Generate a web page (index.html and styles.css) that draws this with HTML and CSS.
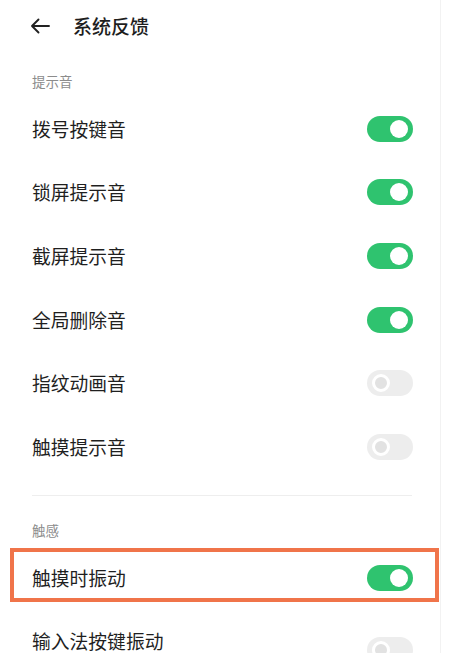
FILE: index.html
```html
<!DOCTYPE html>
<html lang="zh-CN">
<head>
<meta charset="utf-8">
<link rel="stylesheet" href="styles.css">
</head>
<body>
<div class="page">
  <header class="header">
    <svg class="back" width="22" height="16" viewBox="0 0 22 16"><path d="M20 8H3M9.5 1.5L3 8l6.5 6.5" fill="none" stroke="#222" stroke-width="1.9" stroke-linecap="round" stroke-linejoin="round"/></svg>
    <h1 class="title">系统反馈</h1>
  </header>

  <div class="section-label">提示音</div>
  <div class="row"><span class="row-text">拨号按键音</span><span class="switch on"></span></div>
  <div class="row"><span class="row-text">锁屏提示音</span><span class="switch on"></span></div>
  <div class="row"><span class="row-text">截屏提示音</span><span class="switch on"></span></div>
  <div class="row"><span class="row-text">全局删除音</span><span class="switch on"></span></div>
  <div class="row"><span class="row-text">指纹动画音</span><span class="switch off"></span></div>
  <div class="row"><span class="row-text">触摸提示音</span><span class="switch off"></span></div>

  <div class="divider"></div>

  <div class="section-label second">触感</div>
  <div class="row highlight"><span class="row-text">触摸时振动</span><span class="switch on"></span></div>
  <div class="row last"><span class="row-text">输入法按键振动</span><span class="switch off"></span></div>
</div>
</body>
</html>
```

FILE: styles.css
```css
html, body {
  margin: 0;
  padding: 0;
  background: #ffffff;
}
body {
  width: 450px;
  height: 653px;
  overflow: hidden;
  font-family: "Noto Sans CJK SC", "Noto Sans", sans-serif;
  color: #222222;
}
.page {
  width: 441px;
  height: 653px;
  border-right: 1px solid #f2f2f2;
  box-sizing: border-box;
  overflow: hidden;
}
.header {
  height: 52px;
  display: flex;
  align-items: center;
  padding-left: 29px;
}
.back {
  display: block;
  margin-right: 22px;
}
.title {
  margin: 0;
  font-size: 19px;
  font-weight: 500;
  line-height: 24px;
  color: #1e1e1e;
}
.section-label {
  padding: 20px 0 7px 32px;
  font-size: 13.5px;
  line-height: 18px;
  color: #8c8c8c;
}
.section-label.second {
  padding-top: 25px;
  padding-bottom: 8px;
}
.row {
  height: 63.6px;
  display: flex;
  align-items: center;
  justify-content: space-between;
  padding: 0 27px 0 32px;
  position: relative;
}
.row-text {
  font-size: 18.8px;
  line-height: 20px;
  color: #1f1f1f;
}
.switch {
  width: 46px;
  height: 26px;
  border-radius: 13px;
  position: relative;
  flex: none;
}
.switch.on {
  background: #2fc36f;
}
.switch.off {
  background: #ededed;
}
.switch::after {
  content: "";
  position: absolute;
  top: 4px;
  width: 18px;
  height: 18px;
  border-radius: 50%;
  box-sizing: border-box;
}
.switch.on::after {
  right: 5px;
  background: #ffffff;
}
.switch.off::after {
  left: 5px;
  background: #e2e2e2;
  border: 3.5px solid #ffffff;
}
.divider {
  height: 1px;
  background: #eeeeee;
  margin: 16px 28px 0 32px;
}
.highlight::after {
  content: "";
  position: absolute;
  left: 10px;
  right: 1px;
  top: 1px;
  bottom: 8px;
  border: 4px solid #f0744a;
}
.row.last {
  height: 42px;
  align-items: flex-start;
  padding-top: 21px;
  box-sizing: border-box;
}
.row.last .switch {
  margin-top: 6px;
}
```
